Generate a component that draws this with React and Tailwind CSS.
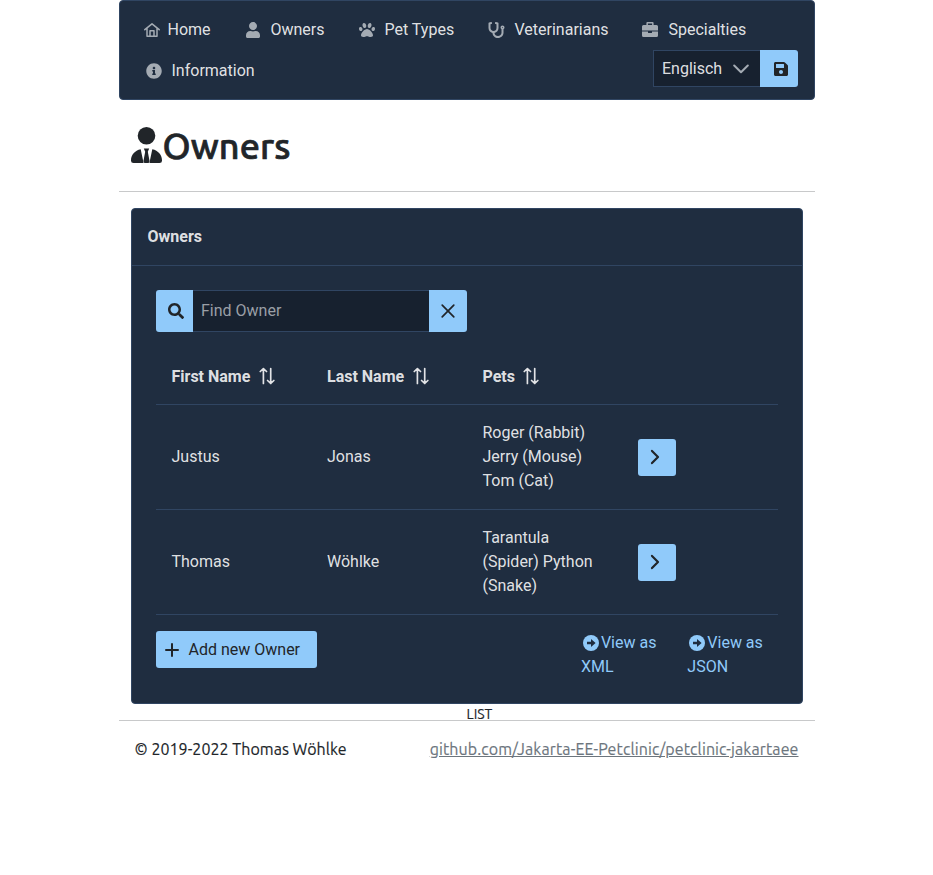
import React from "react";
import {
  FaUser,
  FaPaw,
  FaStethoscope,
  FaInfoCircle,
  FaSave,
  FaSearch,
} from "react-icons/fa";

const roboto = "font-['Roboto',sans-serif]";

function Stroke({ d, className, width = 1.5 }) {
  return (
    <svg
      viewBox="0 0 16 16"
      className={className}
      fill="none"
      stroke="currentColor"
      strokeWidth={width}
      strokeLinecap="round"
      strokeLinejoin="round"
    >
      <path d={d} />
    </svg>
  );
}

function HomeIcon() {
  return (
    <Stroke
      className="ml-[1px] h-4 w-4 shrink-0"
      width={1.5}
      d="M.8 7.7 8 1.8l7.2 5.9M3 6.5v7.8h10V6.5M6 14V8.8h4V14"
    />
  );
}

function SortIcon() {
  return (
    <Stroke
      className="-mt-[1px] ml-[0.5px] h-[18px] w-[18px]"
      width={1.5}
      d="M4.8 14.6V1.4M2 4 4.8 1.4 7.6 4M11.3 1.4v13.2M8.5 12l2.8 2.6 2.8-2.6"
    />
  );
}

function BriefcaseIcon() {
  return (
    <svg viewBox="0 0 16 16" className="h-4 w-4" fill="currentColor">
      <path
        fillRule="evenodd"
        d="M5.4 0H10.6Q11.6 0 11.6 1V3H14.5Q16 3 16 4.5V8.5H0V4.5Q0 3 1.5 3H4.4V1Q4.4 0 5.4 0ZM5.9 1.4V3H10.1V1.4Z"
      />
      <path d="M0 9.5H6V10.5Q6 11 6.5 11H9.5Q10 11 10 10.5V9.5H16V13.5Q16 15 14.5 15H1.5Q0 15 0 13.5Z" />
    </svg>
  );
}

function UserTieIcon() {
  return (
    <svg viewBox="0 0 32 36" className="mb-[2px] h-9 w-8" fill="currentColor">
      <circle cx="15.5" cy="8.8" r="8.8" />
      <path d="M9.7 22.2C3.8 23.5 0 27.8 0 33.2V33.7Q0 36 2.5 36H12.6ZM21.3 22.2C27.2 23.5 31 27.8 31 33.2V33.7Q31 36 28.5 36H18.4Z" />
      <path d="M12.8 21.5H18.2L16.8 24.8 18.6 34.2 17.6 36H13.4L12.4 34.2 14.2 24.8Z" />
    </svg>
  );
}

function ArrowCircle() {
  return (
    <svg viewBox="0 0 16 16" className="ml-[2px] mr-[2px] h-4 w-4 shrink-0">
      <circle cx="8" cy="8" r="8" fill="currentColor" />
      <path d="M4 6.7h4V4L12.6 8 8 12V9.3H4Z" fill="#1f2d40" />
    </svg>
  );
}

function NavItem({ icon, label, className }) {
  return (
    <a className={`flex h-6 items-center ${className}`}>
      <span className="flex h-6 w-[17px] shrink-0 items-center justify-center text-[#a4abb3]">{icon}</span>
      <span className="ml-2 whitespace-nowrap">{label}</span>
    </a>
  );
}

function NavBar() {
  return (
    <nav className={`h-[100px] rounded border border-[#304562] bg-[#1f2d40] pl-[23px] pr-4 pt-[17px] text-[rgba(255,255,255,0.87)] ${roboto}`}>
      <div className="flex">
        <NavItem icon={<HomeIcon />} label="Home" className="w-[101px]" />
        <NavItem icon={<FaUser className="h-4 w-4" />} label="Owners" className="w-[115px] gap-[1px] pl-[1px]" />
        <NavItem icon={<FaPaw className="h-4 w-4" />} label="Pet Types" className="w-[128px] gap-[1px]" />
        <NavItem icon={<FaStethoscope className="h-4 w-[17px]" />} label="Veterinarians" className="w-[154px] gap-[2px] pl-[1px]" />
        <NavItem icon={<BriefcaseIcon />} label="Specialties" className="gap-[2px] pl-[1px]" />
      </div>
      <div className="mt-2 flex justify-between">
        <NavItem icon={<FaInfoCircle className="h-4 w-4" />} label="Information" className="mt-[9px] gap-[1px] pl-[3px]" />
        <div className="flex h-[37px]">
          <div className="flex w-[107px] items-center justify-between border border-r-0 border-[#304562] bg-[#17212f] pl-[8.5px] pr-[11px]">
            <span>Englisch</span>
            <Stroke className="h-4 w-4 text-[#a4abb3]" width={2} d="M1.2 4.5 8 11.2l6.8-6.7" />
          </div>
          <button className="flex w-[38px] items-center justify-center rounded-r-[3px] bg-[#90cafa] pl-1 text-[#212529]">
            <FaSave className="h-4 w-4" />
          </button>
        </div>
      </div>
    </nav>
  );
}

function HeadCell({ label }) {
  return (
    <div className="flex w-[155.5px] items-center gap-[7px] pl-4 pt-[1px] font-bold">
      <span>{label}</span>
      <SortIcon />
    </div>
  );
}

function OwnerRow({ first, last, pets }) {
  return (
    <div className="flex h-[105px] items-center border-b border-[#304562]">
      <div className="w-[155.5px] pl-4">{first}</div>
      <div className="w-[155.5px] pl-4">{last}</div>
      <div className="w-[155.5px] pl-4 leading-6">
        {pets.map((line) => (
          <div key={line}>{line}</div>
        ))}
      </div>
      <div className="pl-[15.5px]">
        <button className="flex h-[37px] w-[38px] items-center justify-center rounded-[3px] bg-[#90cafa] pr-1 text-[#212529]">
          <Stroke className="h-4 w-4" width={2.2} d="M5 1.9 11 8 5 14.1" />
        </button>
      </div>
    </div>
  );
}

function ViewLink({ format }) {
  return (
    <a className="block w-[77px] leading-6 text-[#90cafa]">
      <span className="flex items-center whitespace-nowrap">
        <ArrowCircle />
        View as
      </span>
      {format}
    </a>
  );
}

function OwnersPanel() {
  return (
    <section className={`mx-3 mt-4 h-[496px] rounded border border-[#304562] bg-[#1f2d40] text-[rgba(255,255,255,0.87)] ${roboto}`}>
      <header className="flex h-[57px] items-center border-b border-[#304562] pl-4 font-bold">Owners</header>
      <div className="px-6 pt-6">
        <div className="flex h-[42px] w-[311px]">
          <button className="flex w-[37px] items-center justify-center rounded-l-[3px] bg-[#90cafa] pl-[3px] text-[#212529]">
            <FaSearch className="h-4 w-4" />
          </button>
          <div className="flex w-[236px] items-center border-y border-[#304562] bg-[#17212f] pl-[8.5px] text-[#9a9fa6]">Find Owner</div>
          <button className="flex w-[38px] items-center justify-center rounded-r-[3px] bg-[#90cafa] text-[#212529]">
            <Stroke className="h-4 w-4" width={1.7} d="M2.2 2.2l11.6 11.6M13.8 2.2 2.2 13.8" />
          </button>
        </div>
        <div className="mt-4 flex h-[57px] border-b border-[#304562]">
          <HeadCell label="First Name" />
          <HeadCell label="Last Name" />
          <HeadCell label="Pets" />
        </div>
        <OwnerRow first="Justus" last="Jonas" pets={["Roger (Rabbit)", "Jerry (Mouse)", "Tom (Cat)"]} />
        <OwnerRow first="Thomas" last="Wöhlke" pets={["Tarantula", "(Spider) Python", "(Snake)"]} />
        <div className="mt-4 flex justify-between">
          <button className="flex h-[37px] w-[161px] items-center rounded-[3px] bg-[#90cafa] pl-2 text-[#212529]">
            <Stroke className="h-4 w-4" width={2} d="M8 2v12M2 8h12" />
            <span className="ml-[9px]">Add new Owner</span>
          </button>
          <div className="flex gap-[29.4px] pr-[13.2px]">
            <ViewLink format="XML" />
            <ViewLink format="JSON" />
          </div>
        </div>
      </div>
    </section>
  );
}

export default function App() {
  return (
    <div className="min-h-[875px] bg-white text-[#212529]">
      <div className="mx-auto w-[696px] font-['Ubuntu','Noto_Sans',sans-serif]">
        <NavBar />
        <h1 className="flex h-[92px] items-center border-b border-[#c8c9ca] pl-3 text-[36px] font-medium">
          <UserTieIcon />
          <span className="tracking-[0.1px] [-webkit-text-stroke:0.7px_#212529]">Owners</span>
        </h1>
        <OwnersPanel />
        <div className="flex h-[17px] items-center justify-center border-b border-[#c8c9ca] pl-[26px] pr-0 text-[14px] leading-none">
          <span className="mt-[3px] [-webkit-text-stroke:0.15px_#212529]">LIST</span>
        </div>
        <footer className="flex justify-between px-4 pt-4 leading-6">
          <span className="tracking-[0.04px] [-webkit-text-stroke:0.15px_#212529]">© 2019-2022 Thomas Wöhlke</span>
          <a className="tracking-[0.095px] text-[#6c757d] underline [-webkit-text-stroke:0.15px_#6c757d]">github.com/Jakarta-EE-Petclinic/petclinic-jakartaee</a>
        </footer>
      </div>
    </div>
  );
}
